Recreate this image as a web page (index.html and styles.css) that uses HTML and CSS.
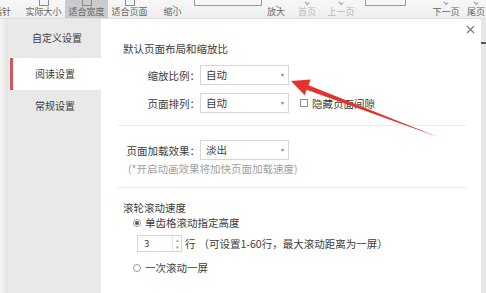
FILE: index.html
```html
<!DOCTYPE html>
<html lang="zh-CN">
<head>
    <meta charset="UTF-8">
    <meta name="viewport" content="width=device-width, initial-scale=1.0">
    <title>阅读设置</title>
    <link rel="stylesheet" href="styles.css">
</head>
<body>
    <div class="toolbar">
        <div class="tool first"><span class="ico"></span><span class="lbl">指针</span></div>
        <div class="tool"><span class="ico box"></span><span class="lbl">实际大小</span></div>
        <div class="tool active"><span class="ico box"></span><span class="lbl">适合宽度</span></div>
        <div class="tool"><span class="ico box"></span><span class="lbl">适合页面</span></div>
        <div class="tool"><span class="ico lens"></span><span class="lbl">缩小</span></div>
        <div class="page-box wide"></div>
        <div class="tool narrow"><span class="ico lens"></span><span class="lbl">放大</span></div>
        <div class="tool mid muted"><span class="ico tick"></span><span class="lbl">首页</span></div>
        <div class="tool mid muted"><span class="ico tick"></span><span class="lbl">上一页</span></div>
        <div class="page-box"></div>
        <div class="tool next"><span class="ico tick"></span><span class="lbl">下一页</span></div>
        <div class="tool last"><span class="ico tick"></span><span class="lbl">尾页</span></div>
    </div>

    <div class="dialog">
        <div class="shade"></div>

        <aside class="side">
            <div class="side-title">自定义设置</div>
            <div class="side-item selected">阅读设置</div>
            <div class="side-item">常规设置</div>
        </aside>

        <main class="panel">
            <svg class="close" width="9" height="9" viewBox="0 0 9 9">
                <path d="M1 1 L8 8 M8 1 L1 8" stroke="#777" stroke-width="1.1" fill="none"/>
            </svg>

            <div class="section-title">默认页面布局和缩放比</div>
            <div class="form-grid">
                <label class="field-label">缩放比例：</label>
                <div class="row">
                    <div class="select">自动<span class="caret">▾</span></div>
                </div>
                <label class="field-label">页面排列：</label>
                <div class="row">
                    <div class="select">自动<span class="caret">▾</span></div>
                    <span class="checkbox"></span>
                    <span class="check-text">隐藏页面间隙</span>
                </div>
            </div>

            <div class="divider"></div>

            <div class="form-grid second">
                <label class="field-label">页面加载效果：</label>
                <div class="row">
                    <div class="select">淡出<span class="caret">▾</span></div>
                </div>
            </div>
            <div class="note">(*开启动画效果将加快页面加载速度)</div>

            <div class="divider"></div>

            <div class="section-title scroll">滚轮滚动速度</div>
            <div class="option"><span class="radio on"></span>单齿格滚动指定高度</div>
            <div class="spin-row">
                <div class="spin">
                    <span class="spin-value">3</span>
                    <span class="spin-btns"><i>▴</i><i>▾</i></span>
                </div>
                <span class="spin-unit">行</span>
                <span class="spin-hint">（可设置1-60行，最大滚动距离为一屏）</span>
            </div>
            <div class="option last-option"><span class="radio"></span>一次滚动一屏</div>
        </main>

        <div class="scrollbar"><span class="thumb"></span></div>
    </div>

    <svg class="arrow" width="486" height="293" viewBox="0 0 486 293">
        <polygon fill="#e5322d" points="291,81 310.6,79.5 308.5,85.2 438,137 306.6,89.8 304.8,95.2"/>
    </svg>
</body>
</html>
```

FILE: styles.css
```css
:root {
    --text: #3c3c3c;
    --text-gray: #a0a0a0;
    --border: #d6d6d6;
    --side-bg: #e9e9e9;
    --accent: #d4565c;
}

* {
    margin: 0;
    padding: 0;
    box-sizing: border-box;
}

body {
    width: 486px;
    height: 293px;
    overflow: hidden;
    position: relative;
    font-family: "Noto Sans CJK SC", "Microsoft YaHei", sans-serif;
    font-size: 10.5px;
    color: var(--text);
    background-color: #ffffff;
}

/* top toolbar */
.toolbar {
    display: flex;
    height: 19px;
    margin-left: -18px;
    background: linear-gradient(#f7f7f7, #efefef);
    border-bottom: 1px solid #dddddd;
    overflow: hidden;
}

.tool {
    width: 43px;
    flex-shrink: 0;
    display: flex;
    flex-direction: column;
    align-items: center;
    font-size: 9px;
    color: #666666;
}

.tool.first {
    width: 40px;
}

.tool.active {
    background-color: #cbcbcb;
}

.tool.narrow {
    width: 28px;
}

.tool.mid {
    width: 34px;
}

.tool.next {
    width: 36px;
    margin-left: 22px;
}

.tool.last {
    width: 24px;
}

.tool.muted {
    color: #b8b8b8;
}

.ico {
    height: 7px;
    width: 10px;
}

.ico.box {
    border: 1px solid #8a8a8a;
    border-top: none;
}

.ico.lens {
    width: 6px;
    border-bottom: 1px solid #999999;
    transform: rotate(30deg) translateX(4px);
}

.ico.tick {
    width: 4px;
    height: 4px;
    margin-top: 1px;
    margin-bottom: 2px;
    border-right: 1px solid #999999;
    border-bottom: 1px solid #999999;
    transform: rotate(45deg);
}

.lbl {
    line-height: 12px;
    white-space: nowrap;
}

.page-box {
    width: 68px;
    height: 6px;
    flex-shrink: 0;
    border: 1px solid #9a9a9a;
    border-top: none;
}

.page-box:not(.wide) {
    width: 41px;
    margin-left: 7px;
}

/* dialog */
.dialog {
    display: flex;
    height: 274px;
}

.shade {
    width: 8px;
    background: linear-gradient(to right, #f6f6f6, #e3e3e3);
}

.side {
    width: 93px;
    background-color: var(--side-bg);
    padding-top: 12px;
}

.side-title {
    line-height: 14px;
    padding-left: 24px;
    font-size: 10px;
    margin-bottom: 13px;
}

.side-item {
    height: 32px;
    line-height: 32px;
    padding-left: 27px;
    font-size: 10px;
}

.side-item.selected {
    margin-left: 2px;
    padding-left: 22px;
    background-color: #ffffff;
    border-left: 3px solid var(--accent);
}

.panel {
    position: relative;
    width: 380px;
    padding: 23px 14px 0 16px;
    background-color: #ffffff;
}

.close {
    position: absolute;
    top: 6px;
    right: 6px;
}

.section-title {
    line-height: 14px;
    padding-left: 6px;
}

.section-title.scroll {
    margin-top: 13px;
}

.form-grid {
    display: grid;
    grid-template-columns: 83px auto;
    row-gap: 8px;
    align-items: center;
    margin-top: 9px;
}

.form-grid.second {
    margin-top: 14px;
}

.field-label {
    text-align: right;
    white-space: nowrap;
}

.row {
    display: flex;
    align-items: center;
}

.select {
    position: relative;
    width: 89px;
    height: 20px;
    line-height: 18px;
    padding-left: 5px;
    border: 1px solid var(--border);
}

.caret {
    position: absolute;
    right: 4px;
    top: 0;
    font-size: 6px;
    color: #888888;
}

.checkbox {
    width: 8px;
    height: 8px;
    margin-left: 11px;
    border: 1px solid #8c8c8c;
}

.check-text {
    margin-left: 4px;
}

.divider {
    height: 1px;
    margin-top: 12px;
    background-color: #ececec;
}

.note {
    margin-top: 2px;
    padding-left: 11px;
    line-height: 14px;
    color: var(--text-gray);
}

.note + .divider {
    margin-top: 11px;
}

.option {
    display: flex;
    align-items: center;
    gap: 4px;
    margin-top: 1px;
    padding-left: 16px;
    line-height: 14px;
}

.option.last-option {
    margin-top: 9px;
}

.radio {
    width: 8px;
    height: 8px;
    border: 1px solid #9a9a9a;
    border-radius: 50%;
    position: relative;
}

.radio.on::after {
    content: "";
    position: absolute;
    top: 1px;
    left: 1px;
    width: 4px;
    height: 4px;
    border-radius: 50%;
    background-color: #555555;
}

.spin-row {
    display: flex;
    align-items: center;
    margin-top: 5px;
    padding-left: 20px;
}

.spin {
    display: flex;
    width: 45px;
    height: 17px;
    border: 1px solid var(--border);
}

.spin-value {
    flex: 1;
    padding-left: 6px;
    line-height: 15px;
    font-size: 9.5px;
}

.spin-btns {
    width: 9px;
    display: flex;
    flex-direction: column;
    border-left: 1px solid #e2e2e2;
    font-size: 5px;
    line-height: 7px;
    color: #999999;
    text-align: center;
}

.spin-btns i {
    font-style: normal;
}

.spin-unit {
    margin-left: 3px;
}

.spin-hint {
    margin-left: 3px;
}

.scrollbar {
    width: 5px;
    background-color: #e6e6e6;
    padding-top: 23px;
}

.thumb {
    display: block;
    height: 2px;
    background-color: #555555;
}

/* red pointer */
.arrow {
    position: absolute;
    top: 0;
    left: 0;
    pointer-events: none;
}
```
